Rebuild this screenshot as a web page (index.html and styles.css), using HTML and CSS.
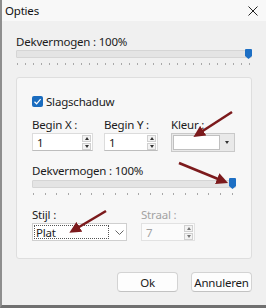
FILE: index.html
```html
<!DOCTYPE html>
<html>
<head>
<meta charset="utf-8">
<link rel="stylesheet" href="styles.css">
</head>
<body>
<div class="window">
  <div class="titlebar">
    <span class="title">Opties</span>
    <svg class="close" width="10" height="10" viewBox="0 0 10 10"><path d="M0.5 0.5 L9.5 9.5 M9.5 0.5 L0.5 9.5" stroke="#222" stroke-width="1"/></svg>
  </div>
  <div class="content">
    <div class="label">Dekvermogen : 100%</div>
    <div class="slider wide">
      <div class="track"></div>
      <svg class="thumb" width="7" height="10" viewBox="0 0 7 10"><path d="M0 1 Q0 0 1 0 L6 0 Q7 0 7 1 L7 7 L3.5 10 L0 7 Z" fill="#1d6fc4"/></svg>
      <div class="ticks"></div>
    </div>

    <div class="group">
      <div class="check-row">
        <span class="checkbox"><svg width="9" height="9" viewBox="0 0 9 9"><path d="M1.5 4.8 L3.6 6.8 L7.6 2.2" fill="none" stroke="#fff" stroke-width="1.2"/></svg></span>
        <span>Slagschaduw</span>
      </div>

      <div class="fields">
        <div class="field fx">
          <div class="flabel">Begin X :</div>
          <div class="spin"><span class="val">1</span><span class="spinbtns"><i class="up"></i><i class="down"></i></span></div>
        </div>
        <div class="field fy">
          <div class="flabel">Begin Y :</div>
          <div class="spin"><span class="val">1</span><span class="spinbtns"><i class="up"></i><i class="down"></i></span></div>
        </div>
        <div class="field fk">
          <div class="flabel">Kleur :</div>
          <div class="colorcombo"><span class="swatch"></span><span class="ddbtn"><i class="down"></i></span></div>
        </div>
      </div>

      <div class="label inner">Dekvermogen : 100%</div>
      <div class="slider narrow">
        <div class="track"></div>
        <svg class="thumb" width="7" height="11" viewBox="0 0 7 11"><path d="M0 1 Q0 0 1 0 L6 0 Q7 0 7 1 L7 8 L3.5 11 L0 8 Z" fill="#1d6fc4"/></svg>
        <div class="ticks"></div>
      </div>

      <div class="fields second">
        <div class="field fs">
          <div class="flabel">Stijl :</div>
          <div class="combo"><span class="focus">Plat</span><svg class="chev" width="9" height="5" viewBox="0 0 9 5"><path d="M0.5 0.5 L4.5 4.5 L8.5 0.5" fill="none" stroke="#666" stroke-width="1"/></svg></div>
        </div>
        <div class="field fr disabled">
          <div class="flabel">Straal :</div>
          <div class="spin"><span class="val">7</span><span class="spinbtns"><i class="up"></i><i class="down"></i></span></div>
        </div>
      </div>
    </div>

    <div class="buttons">
      <button class="btn">Ok</button>
      <button class="btn">Annuleren</button>
    </div>
  </div>

  <svg class="arrows" width="266" height="308" viewBox="0 0 266 308">
    <defs>
      <marker id="ah" markerWidth="4.5" markerHeight="4.4" refX="2.4" refY="2.2" orient="auto" markerUnits="strokeWidth">
        <path d="M0 0 L4.5 2.2 L0 4.4 Z" fill="#7c1a1c"/>
      </marker>
    </defs>
    <line x1="232" y1="112" x2="198" y2="134" stroke="#7c1a1c" stroke-width="2.6" marker-end="url(#ah)"/>
    <line x1="179" y1="163" x2="223" y2="181" stroke="#7c1a1c" stroke-width="2.6" marker-end="url(#ah)"/>
    <line x1="106" y1="211" x2="74" y2="230" stroke="#7c1a1c" stroke-width="2.6" marker-end="url(#ah)"/>
  </svg>
</div>
</body>
</html>
```

FILE: styles.css
```css
html, body {
  margin: 0;
  padding: 0;
}
body {
  width: 266px;
  height: 308px;
  overflow: hidden;
  font-family: "Noto Sans", "Open Sans", sans-serif;
  font-size: 11.5px;
  letter-spacing: -0.2px;
  color: #1b1b1b;
}
.window {
  position: relative;
  width: 266px;
  height: 308px;
  box-sizing: border-box;
  border-left: 2px solid #8e8e8e;
  border-bottom: 3px solid #707070;
  background: #f0f0f0;
  display: flex;
  flex-direction: column;
}
.titlebar {
  height: 21px;
  background: #f8f8f8;
  display: flex;
  align-items: center;
  justify-content: space-between;
  padding: 0 8px 0 3px;
}
.title {
  font-size: 11.5px;
  color: #111;
}
.close {
  margin-top: 1px;
}
.content {
  padding: 13px 14px 0 14px;
  display: flex;
  flex-direction: column;
}
.label {
  line-height: 16px;
  height: 16px;
}
.slider {
  position: relative;
  height: 14px;
  margin-top: 0;
}
.slider .track {
  height: 6px;
  background: #e4e4e4;
  border: 1px solid #d5d5d5;
  border-radius: 1px;
  margin-top: 0;
}
.slider .ticks {
  height: 2px;
  margin-top: 5px;
  margin-left: 1px;
}
.slider.wide .ticks {
  background: repeating-linear-gradient(to right, #a8a8a8 0 1px, transparent 1px 8px);
  width: 234px;
}
.slider.wide .thumb {
  position: absolute;
  right: 0;
  top: -1px;
}
.slider.narrow .ticks {
  background: repeating-linear-gradient(to right, #a8a8a8 0 1px, transparent 1px 11.7px);
  width: 204px;
}
.slider.narrow .thumb {
  position: absolute;
  right: 0;
  top: -2px;
}
.group {
  margin-top: 13px;
  height: 182px;
  box-sizing: border-box;
  border: 1px solid #dedede;
  border-radius: 3px;
  background: #f7f7f7;
  padding: 15px 16px 0 15px;
  display: flex;
  flex-direction: column;
}
.check-row {
  display: flex;
  align-items: center;
  gap: 3px;
  height: 16px;
}
.checkbox {
  width: 11px;
  height: 11px;
  border-radius: 2px;
  background: #1a6cbf;
  display: flex;
  align-items: center;
  justify-content: center;
}
.checkbox svg {
  display: block;
}
.fields {
  display: flex;
  margin-top: 8px;
}
.field {
  display: flex;
  flex-direction: column;
}
.flabel {
  height: 16px;
  line-height: 16px;
}
.fx { width: 72px; }
.fy { width: 67px; }
.fs { width: 109px; }
.spin {
  height: 18px;
  box-sizing: border-box;
  background: #fff;
  border: 1px solid #dcdcdc;
  border-bottom-color: #bdbdbd;
  display: flex;
  align-items: center;
  justify-content: space-between;
  padding: 0 1px 0 4px;
}
.fx .spin { width: 61px; }
.fy .spin { width: 54px; }
.fr .spin { width: 54px; }
.spinbtns {
  display: flex;
  flex-direction: column;
  gap: 1px;
}
.spinbtns i, .ddbtn i {
  display: block;
  width: 9px;
  height: 7px;
  box-sizing: border-box;
  border: 1px solid #d0d0d0;
  background: #f3f3f3;
  position: relative;
}
.spinbtns i::after, .ddbtn i::after {
  content: "";
  position: absolute;
  left: 2px;
  border-left: 2px solid transparent;
  border-right: 2px solid transparent;
}
.spinbtns i.up::after {
  top: 1px;
  border-bottom: 3px solid #333;
}
.spinbtns i.down::after {
  top: 1px;
  border-top: 3px solid #333;
}
.colorcombo {
  width: 64px;
  height: 19px;
  box-sizing: border-box;
  border: 1px solid #c9c9c9;
  background: #e9e9e9;
  display: flex;
  align-items: center;
  padding: 1px;
  gap: 2px;
}
.swatch {
  flex: 1;
  height: 15px;
  background: #fff;
  border: 1px solid #c0c0c0;
  box-sizing: border-box;
}
.ddbtn {
  width: 11px;
  height: 15px;
  display: flex;
  align-items: center;
  justify-content: center;
}
.ddbtn i {
  border: none;
  background: transparent;
  width: 6px;
  height: 4px;
}
.ddbtn i::after {
  left: 0;
  top: 0;
  border-top: 3px solid #333;
}
.label.inner {
  margin-top: 11px;
}
.slider.narrow {
  margin-top: 1px;
  width: 204px;
}
.fields.second {
  margin-top: 13px;
}
.combo {
  width: 95px;
  height: 18px;
  box-sizing: border-box;
  background: #fff;
  border: 1px solid #cfcfcf;
  display: flex;
  align-items: center;
  padding: 1px;
  gap: 6px;
}
.focus {
  width: 75px;
  height: 14px;
  line-height: 13px;
  box-sizing: border-box;
  border: 1px dotted #555;
  padding-left: 1px;
}
.chev {
  display: block;
}
.disabled .flabel,
.disabled .val {
  color: #a3a3a3;
}
.disabled .spin {
  background: #fbfbfb;
  border-color: #e2e2e2;
}
.disabled .spinbtns i::after {
  border-top-color: #777;
  border-bottom-color: #777;
}
.buttons {
  display: flex;
  justify-content: flex-end;
  gap: 13px;
  margin-top: 13px;
}
.btn {
  width: 61px;
  height: 20px;
  font-family: inherit;
  font-size: 11.5px;
  letter-spacing: -0.2px;
  color: #1b1b1b;
  background: #fdfdfd;
  border: 1px solid #d3d3d3;
  border-bottom-color: #c2c2c2;
  border-radius: 4px;
  padding: 0;
}
.arrows {
  position: absolute;
  left: -2px;
  top: 0;
  pointer-events: none;
}
```
